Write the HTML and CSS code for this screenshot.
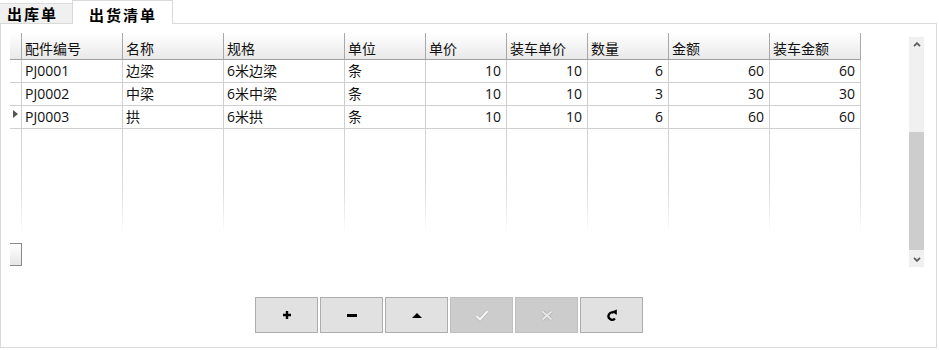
FILE: index.html
```html
<!DOCTYPE html>
<html>
<head>
<meta charset="utf-8">
<link rel="stylesheet" href="styles.css">
</head>
<body>
<div class="tabs">
  <div class="tab">出库单</div>
  <div class="tab active">出货清单</div>
</div>
<div class="panel">
  <div class="grid-row">
    <div class="grid-col">
      <div class="grid">
        <div class="c rh hd corner"></div>
        <div class="c hd">配件编号</div>
        <div class="c hd">名称</div>
        <div class="c hd">规格</div>
        <div class="c hd">单位</div>
        <div class="c hd">单价</div>
        <div class="c hd">装车单价</div>
        <div class="c hd">数量</div>
        <div class="c hd">金额</div>
        <div class="c hd">装车金额</div>

        <div class="c rh"></div>
        <div class="c">PJ0001</div>
        <div class="c">边梁</div>
        <div class="c">6米边梁</div>
        <div class="c">条</div>
        <div class="c num">10</div>
        <div class="c num">10</div>
        <div class="c num">6</div>
        <div class="c num">60</div>
        <div class="c num">60</div>

        <div class="c rh"></div>
        <div class="c">PJ0002</div>
        <div class="c">中梁</div>
        <div class="c">6米中梁</div>
        <div class="c">条</div>
        <div class="c num">10</div>
        <div class="c num">10</div>
        <div class="c num">3</div>
        <div class="c num">30</div>
        <div class="c num">30</div>

        <div class="c rh"><span class="cur"></span></div>
        <div class="c">PJ0003</div>
        <div class="c">拱</div>
        <div class="c">6米拱</div>
        <div class="c">条</div>
        <div class="c num">10</div>
        <div class="c num">10</div>
        <div class="c num">6</div>
        <div class="c num">60</div>
        <div class="c num">60</div>

        <div class="f"></div><div class="f"></div><div class="f"></div><div class="f"></div><div class="f"></div>
        <div class="f"></div><div class="f"></div><div class="f"></div><div class="f"></div><div class="f nol"></div>
      </div>
      <div class="hscroll"></div>
    </div>
    <div class="vscroll">
      <div class="sb-btn">
        <svg width="8" height="5" viewBox="0 0 8 5"><polyline points="1,4.2 4,1.2 7,4.2" fill="none" stroke="#5a5a5a" stroke-width="1.8"/></svg>
      </div>
      <div class="sb-track"><div class="sb-thumb"></div></div>
      <div class="sb-btn">
        <svg width="8" height="5" viewBox="0 0 8 5"><polyline points="1,0.8 4,3.8 7,0.8" fill="none" stroke="#5a5a5a" stroke-width="1.8"/></svg>
      </div>
    </div>
  </div>
  <div class="toolbar">
    <div class="btn">
      <svg width="8" height="8" viewBox="0 0 8 8"><path d="M2.8 0h2.4v2.8H8v2.4H5.2V8H2.8V5.2H0V2.8h2.8z" fill="#000"/></svg>
    </div>
    <div class="btn">
      <svg width="10" height="3" viewBox="0 0 10 3"><rect width="10" height="3" fill="#000"/></svg>
    </div>
    <div class="btn">
      <svg width="10" height="5" viewBox="0 0 10 5"><polygon points="0,5 5,0 10,5" fill="#000"/></svg>
    </div>
    <div class="btn disabled">
      <svg width="14" height="13" viewBox="0 0 14 13"><polyline points="1.5,7 5,10.5 12.5,2" fill="none" stroke="#b4b4b4" stroke-width="3.4"/><polyline points="1.5,7 5,10.5 12.5,2" fill="none" stroke="#f6f6f6" stroke-width="2"/></svg>
    </div>
    <div class="btn disabled">
      <svg width="12" height="11" viewBox="0 0 12 11"><path d="M1.5 1.5L10.5 9.5M10.5 1.5L1.5 9.5" fill="none" stroke="#b0b0b0" stroke-width="3.6"/><path d="M1.5 1.5L10.5 9.5M10.5 1.5L1.5 9.5" fill="none" stroke="#e8e8e8" stroke-width="2"/></svg>
    </div>
    <div class="btn">
      <svg width="10" height="12" viewBox="0 0 10 12"><path d="M6.6 3.8A3.6 3.6 0 1 0 7.9 9.4" fill="none" stroke="#000" stroke-width="2.3"/><polygon points="4.8,2.4 9.9,0.4 9.7,6" fill="#000"/></svg>
    </div>
  </div>
</div>
</body>
</html>
```

FILE: styles.css
```css
html, body {
  margin: 0;
  padding: 0;
  background: #ffffff;
}

body {
  width: 939px;
  height: 350px;
  overflow: hidden;
  font-family: "Open Sans", "Noto Sans CJK SC", sans-serif;
  color: #000;
}

.tabs {
  display: flex;
  align-items: flex-start;
  height: 24px;
  position: relative;
  z-index: 1;
}

.tab {
  box-sizing: border-box;
  width: 72px;
  height: 20px;
  margin-top: 3px;
  background: #f0f0f0;
  border-top: 1px solid #dcdcdc;
  font-family: "Noto Sans CJK SC", sans-serif;
  font-weight: 700;
  font-size: 15px;
  letter-spacing: 2px;
  line-height: 19px;
  padding-left: 7px;
}

.tab.active {
  width: 101px;
  height: 24px;
  margin-top: 0;
  background: #ffffff;
  border: 1px solid #d9d9d9;
  border-bottom: none;
  line-height: 27px;
  padding-left: 16px;
}

.panel {
  box-sizing: border-box;
  width: 937px;
  height: 325px;
  margin-top: -1px;
  border: 1px solid #d9d9d9;
  padding: 9px 0 0 9px;
}

.grid-row {
  display: flex;
  align-items: flex-start;
}

.grid-col {
  width: 851px;
}

.grid {
  display: grid;
  grid-template-columns: 12px 101px 101px 121px 81px 81px 81px 81px 101px 91px;
  grid-template-rows: 27px 23px 23px 23px 104px;
}

.c {
  box-sizing: border-box;
  border-right: 1px solid #cfcfcf;
  border-bottom: 1px solid #cfcfcf;
  font-size: 14px;
  font-weight: 400;
  line-height: 22px;
  padding: 0 3px;
  white-space: nowrap;
  overflow: hidden;
  position: relative;
  color: #111;
}

.num {
  text-align: right;
  padding-right: 5px;
}

.hd {
  background: linear-gradient(#ffffff, #e9e9e9);
  border-right-color: #a8a8a8;
  border-bottom-color: #a0a0a0;
  padding-top: 5px;
  line-height: 21px;
}

.rh {
  padding: 0;
}

.corner {
  border-right-color: #a8a8a8;
}

.cur {
  position: absolute;
  left: 3px;
  top: 4px;
  width: 0;
  height: 0;
  border-top: 4px solid transparent;
  border-bottom: 4px solid transparent;
  border-left: 5px solid #555;
}

.f {
  background: linear-gradient(to bottom, #d2d2d2 0%, #dcdcdc 60%, rgba(255, 255, 255, 0) 100%) right top / 1px 100% no-repeat;
}

.hscroll {
  box-sizing: border-box;
  width: 12px;
  height: 23px;
  margin-top: 10px;
  border: 1px solid #8a8a8a;
  border-left: none;
  background: linear-gradient(#ffffff, #e6e6e6);
}

.vscroll {
  width: 15px;
  height: 230px;
  margin-left: 48px;
  margin-top: 4px;
  background: #f0f0f0;
  display: flex;
  flex-direction: column;
}

.sb-btn {
  height: 15px;
  display: flex;
  align-items: center;
  justify-content: center;
}

.sb-track {
  flex: 1;
  display: flex;
  flex-direction: column;
  padding: 80px 0 2px;
}

.sb-thumb {
  flex: 1;
  background: #cdcdcd;
}

.toolbar {
  display: flex;
  gap: 2px;
  margin-top: 30px;
  padding-left: 245px;
}

.btn {
  box-sizing: border-box;
  width: 63px;
  height: 36px;
  background: #e1e1e1;
  border: 1px solid #adadad;
  display: flex;
  align-items: center;
  justify-content: center;
}

.btn.disabled {
  background: #cccccc;
  border-color: #bfbfbf;
}
```
